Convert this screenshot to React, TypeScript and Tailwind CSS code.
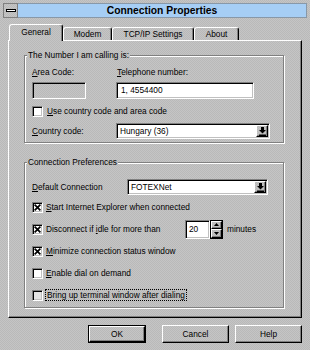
import React from "react";

const dith =
  "bg-[#c0c0c0] bg-[image:repeating-conic-gradient(#c5c5c5_0%_25%,#b9b9b9_0%_50%)] bg-[length:2px_2px] bg-fixed";
const sunken =
  "border border-t-[#808080] border-l-[#808080] border-b-white border-r-white shadow-[inset_1px_1px_0_#000,inset_-1px_-1px_0_#c0c0c0]";
const raised =
  "border border-t-white border-l-white border-b-black border-r-black shadow-[inset_-1px_-1px_0_#808080]";
const etched =
  "border border-[#808080] shadow-[inset_1px_1px_0_#fff,1px_1px_0_#fff]";

function Check({ checked, dim }: { checked?: boolean; dim?: boolean }) {
  return (
    <div
      className={`w-[11px] h-[11px] shrink-0 flex items-center justify-center ${sunken} ${
        dim ? "bg-[#e4e4e4]" : "bg-white"
      }`}
    >
      {checked && (
        <svg width="7" height="7" viewBox="0 0 7 7">
          <path d="M0.6 0.6L6.4 6.4M6.4 0.6L0.6 6.4" stroke="#000" strokeWidth="1.7" />
        </svg>
      )}
    </div>
  );
}

function ArrowBar() {
  return (
    <svg width="7" height="9" viewBox="0 0 7 9">
      <rect x="2" y="0" width="3" height="3" fill="#000" />
      <path d="M0 3H7L3.5 6.5Z" fill="#000" />
      <rect x="0" y="7.5" width="7" height="1.5" fill="#000" />
    </svg>
  );
}

function Combo({ className, text }: { className: string; text: string }) {
  return (
    <div className={`${className} h-[16px] flex items-stretch bg-white ${sunken}`}>
      <div className="flex-1 flex items-center pl-[3px] pt-px">{text}</div>
      <div className={`w-[12px] mt-px mb-px mr-px flex items-center justify-center ${raised} ${dith}`}>
        <ArrowBar />
      </div>
    </div>
  );
}

function U({ children }: { children: React.ReactNode }) {
  return <span className="underline underline-offset-[1px]">{children}</span>;
}

function Tab({ label, sel, className }: { label: string; sel?: boolean; className: string }) {
  return (
    <div
      className={`${className} ${dith} flex justify-center rounded-t-[3px] border-l border-t border-white border-r border-r-black shadow-[inset_-1px_0_0_#808080] ${
        sel ? "h-[17px] pt-[2px] relative z-10" : "h-[13px] mb-px pt-px"
      }`}
    >
      {label}
    </div>
  );
}

function Btn({ label, className, def }: { label: string; className: string; def?: boolean }) {
  if (def)
    return (
      <div className={`${className} h-[18px] border border-black flex`}>
        <div className={`flex-1 flex items-center justify-center ${raised} ${dith}`}>{label}</div>
      </div>
    );
  return (
    <div className={`${className} h-[18px] flex items-center justify-center ${raised} ${dith}`}>{label}</div>
  );
}

export default function App() {
  return (
    <div
      className={`w-[310px] h-[350px] overflow-hidden ${dith} pt-[3px] px-[3px] font-['Liberation_Sans',Arial,sans-serif] text-[8.3px] leading-[11px] text-black`}
    >
      {/* Title bar */}
      <div className="flex h-[15px] w-[304px]">
        <div className={`w-[15px] h-[15px] border border-[#808080] flex items-center justify-center ${dith}`}>
          <div className="w-[10px] h-[3px] border border-black bg-white" />
        </div>
        <div className="flex-1 bg-[#a6cef5] border-y border-r border-[#8898a8] flex items-center justify-center font-bold text-[10.3px]">
          Connection Properties
        </div>
      </div>

      {/* Tabs */}
      <div className="mt-[6px] ml-[6px] h-[17px] -mb-px flex items-end relative z-10">
        <Tab label="General" sel className="w-[54px]" />
        <Tab label="Modem" className="w-[49px]" />
        <Tab label="TCP/IP Settings" className="w-[82px]" />
        <Tab label="About" className="w-[45px]" />
      </div>

      {/* Panel */}
      <div
        className={`ml-[5px] w-[294px] h-[278px] border-l border-t border-white border-r border-b border-r-black border-b-black shadow-[inset_-1px_-1px_0_#808080] pl-[15px] pt-[14px]`}
      >
        {/* Group 1 */}
        <div className={`relative w-[260px] h-[88px] ${etched} pl-[7px] pt-[11px]`}>
          <div className={`absolute top-[-6px] left-[2px] px-px ${dith}`}>The Number I am calling is:</div>
          <div className="flex">
            <div className="w-[84px]">
              <U>A</U>rea Code:
            </div>
            <div className="pl-px">
              <U>T</U>elephone number:
            </div>
          </div>
          <div className="mt-[4px] flex">
            <div className={`w-[54px] h-[17px] ${sunken} ${dith}`} />
            <div className={`ml-[30px] w-[138px] h-[17px] bg-white ${sunken} flex items-center pl-[4px]`}>
              1, 4554400
            </div>
          </div>
          <div className="mt-[7px] h-[11px] flex items-center">
            <Check />
            <div className="ml-[4px]">
              <U>U</U>se country code and area code
            </div>
          </div>
          <div className="mt-[6px] h-[16px] flex items-center">
            <div className="w-[84px]">
              <U>C</U>ountry code:
            </div>
            <Combo className="w-[154px]" text="Hungary (36)" />
          </div>
        </div>

        {/* Group 2 */}
        <div className={`relative mt-[19px] w-[260px] h-[146px] ${etched} pl-[7px] pt-[16px]`}>
          <div className={`absolute top-[-6px] left-[2px] px-px ${dith}`}>Connection Preferences</div>
          <div className="h-[16px] flex items-center">
            <div className="w-[95px]">
              <U>D</U>efault Connection
            </div>
            <Combo className="w-[141px]" text="FOTEXNet" />
          </div>
          <div className="mt-px h-[22px] flex items-center">
            <Check checked />
            <div className="ml-[3px]">
              <U>S</U>tart Internet Explorer when connected
            </div>
          </div>
          <div className="h-[22px] flex items-center">
            <Check checked />
            <div className="ml-[3px] w-[139px]">
              Disconnect if <U>i</U>dle for more than
            </div>
            <div className={`w-[25px] h-[19px] bg-white ${sunken} flex items-center pl-[3px]`}>20</div>
            <div className="w-[13px] h-[19px] flex flex-col border border-black">
              <div className={`flex-1 flex items-center justify-center ${raised} ${dith}`}>
                <svg width="5" height="3" viewBox="0 0 5 3">
                  <path d="M0 3H5L2.5 0Z" fill="#000" />
                </svg>
              </div>
              <div className={`flex-1 flex items-center justify-center ${raised} ${dith}`}>
                <svg width="5" height="3" viewBox="0 0 5 3">
                  <path d="M0 0H5L2.5 3Z" fill="#000" />
                </svg>
              </div>
            </div>
            <div className="ml-[4px]">minutes</div>
          </div>
          <div className="h-[22px] flex items-center">
            <Check checked />
            <div className="ml-[3px]">
              <U>M</U>inimize connection status window
            </div>
          </div>
          <div className="h-[22px] flex items-center">
            <Check />
            <div className="ml-[3px]">
              <U>E</U>nable dial on demand
            </div>
          </div>
          <div className="h-[22px] flex items-center">
            <Check dim />
            <div className="ml-[2px] border border-dotted border-black px-px leading-[10px]">
              Bring up terminal window after dialing
            </div>
          </div>
        </div>
      </div>

      {/* Buttons */}
      <div className="mt-[7px] ml-[85px] flex">
        <Btn label="OK" def className="w-[58px]" />
        <Btn label="Cancel" className="ml-[16px] w-[67px]" />
        <Btn label="Help" className="ml-[6px] w-[67px]" />
      </div>
    </div>
  );
}
